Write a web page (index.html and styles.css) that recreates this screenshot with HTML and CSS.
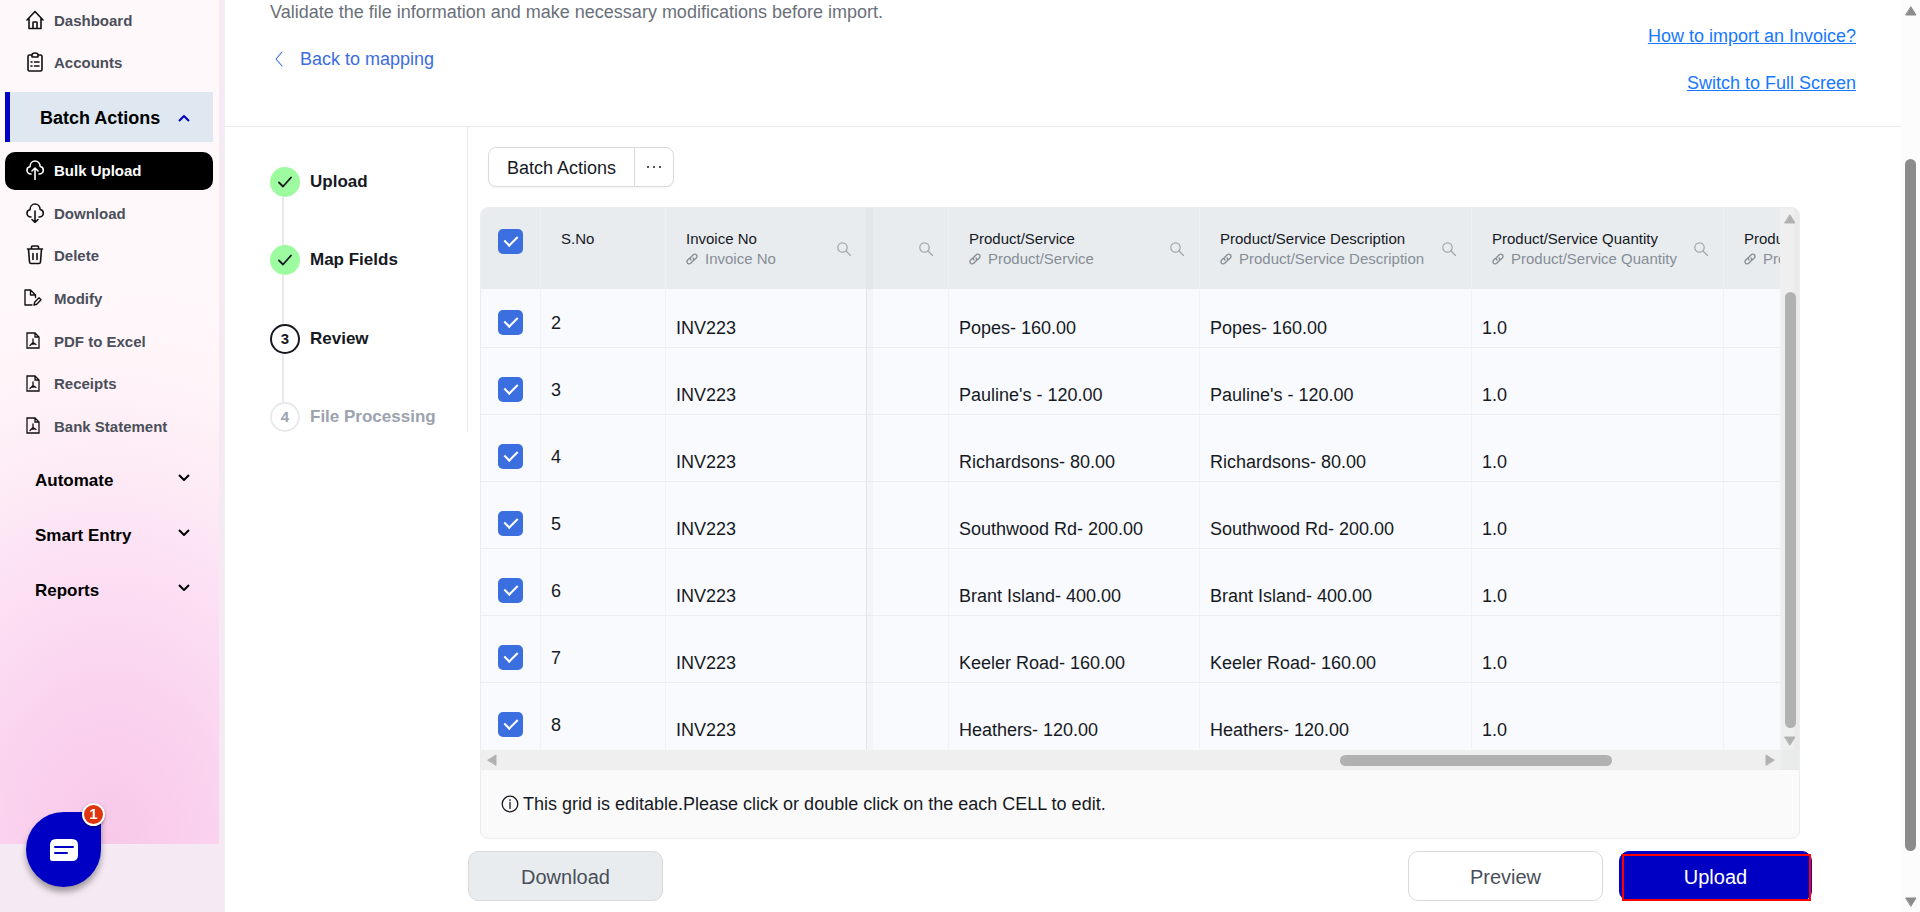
FILE: index.html
```html
<!DOCTYPE html>
<html lang="en">
<head>
<meta charset="utf-8">
<meta name="viewport" content="width=device-width, initial-scale=1">
<title>Bulk Upload - Review</title>
<link rel="stylesheet" href="styles.css">
</head>
<body>
<svg class="sprite" aria-hidden="true">
  <symbol id="i-home" viewBox="0 0 18 20"><path d="M1 10 9 1.500 17 10M3 8.500V18.500H15V8.500M7 18.500V12.500Q7 12 7.500 12H10.500Q11 12 11 12.500V18.500"/></symbol>
  <symbol id="i-clip" viewBox="0 0 18 20"><path d="M6 3H3.500Q2 3 2 4.500V17.500Q2 19 3.500 19H14.500Q16 19 16 17.500V4.500Q16 3 14.500 3H12M6 5V3Q6 1 9 1Q12 1 12 3V5ZM5 10H6M8.500 10H13M5 14H6M8.500 14H13"/></symbol>
  <symbol id="i-cloud-up" viewBox="0 0 18 20"><path d="M5 14C2.500 14 1 12.300 1 10.200C1 8.300 2.300 7 4 6.800C4 3.500 6.200 1 9 1C11.800 1 14 3.500 14.200 6.500C16 6.800 17.300 8.300 17.300 10.200C17.300 12.300 15.500 14 13 14M9 19.500V8M6 11 9 8 12 11"/></symbol>
  <symbol id="i-cloud-down" viewBox="0 0 18 20"><path d="M5 14C2.500 14 1 12.300 1 10.200C1 8.300 2.300 7 4 6.800C4 3.500 6.200 1 9 1C11.800 1 14 3.500 14.200 6.500C16 6.800 17.300 8.300 17.300 10.200C17.300 12.300 15.500 14 13 14M9 8V19.300M6 16.500 9 19.300 12 16.500"/></symbol>
  <symbol id="i-trash" viewBox="0 0 18 20"><path d="M1.500 4H16.500M5.500 4V2Q5.500 1 6.500 1H11.500Q12.500 1 12.500 2V4M2.500 4 3.500 17Q3.700 18.500 5 18.500H13Q14.300 18.500 14.500 17L15.500 4M7 8.500V14.500M11 8.500V14.500"/></symbol>
  <symbol id="i-modify" viewBox="0 0 18 17"><path d="M8 16H1V1H6.500L11.500 6V8.500M6.500 1V6H11.500M10 16 10.600 13.300 15 8.800 17 10.700 12.700 15.300Z"/></symbol>
  <symbol id="i-pdf" viewBox="0 0 14 17"><path d="M1 1H9L13 5V16H1ZM9 1V5H13M7 7V10.500L4 13.500M7 10.500 10 12.500M6 12H8"/></symbol>
  <symbol id="i-up" viewBox="0 0 12 8"><path d="M1 7 6 2 11 7"/></symbol>
  <symbol id="i-down" viewBox="0 0 12 8"><path d="M1 1 6 6 11 1"/></symbol>
  <symbol id="i-back" viewBox="0 0 8 16"><path d="M7 1 1 8 7 15"/></symbol>
  <symbol id="i-tick" viewBox="0 0 14 12"><path d="M1 6.500 5 10.500 13 1.500"/></symbol>
  <symbol id="i-search" viewBox="0 0 14 14"><circle cx="5.500" cy="5.500" r="4.700"/><path d="M9 9 13.500 13.500"/></symbol>
  <symbol id="i-link" viewBox="0 0 12 12"><path d="M5 7C4 6 4 5 5 4L7 2C8 1 9.500 1 10.400 1.800C11.200 2.700 11.200 4 10.300 5L8.500 6.800M7 5C8 6 8 7 7 8L5 10C4 11 2.500 11 1.600 10.200C.8 9.300.8 8 1.700 7L3.500 5.200"/></symbol>
  <symbol id="i-info" viewBox="0 0 18 18"><circle cx="9" cy="9" r="7.800"/><path d="M9 7.500V13.500M9 4.700V5.500"/></symbol>
</svg>

<div class="page">
  <aside class="sidebar">
    <nav class="nav">
      <ul class="nav-top">
        <li><a class="item" href="#"><svg class="icon"><use href="#i-home"/></svg>Dashboard</a></li>
        <li><a class="item" href="#"><svg class="icon"><use href="#i-clip"/></svg>Accounts</a></li>
      </ul>
      <button class="group-open" type="button">Batch Actions<svg class="chev"><use href="#i-up"/></svg></button>
      <ul class="nav-list">
        <li><a class="item current" href="#"><svg class="icon"><use href="#i-cloud-up"/></svg>Bulk Upload</a></li>
        <li><a class="item" href="#"><svg class="icon"><use href="#i-cloud-down"/></svg>Download</a></li>
        <li><a class="item" href="#"><svg class="icon"><use href="#i-trash"/></svg>Delete</a></li>
        <li><a class="item" href="#"><svg class="icon file"><use href="#i-modify"/></svg>Modify</a></li>
        <li><a class="item" href="#"><svg class="icon pdf"><use href="#i-pdf"/></svg>PDF to Excel</a></li>
        <li><a class="item" href="#"><svg class="icon pdf"><use href="#i-pdf"/></svg>Receipts</a></li>
        <li><a class="item" href="#"><svg class="icon pdf"><use href="#i-pdf"/></svg>Bank Statement</a></li>
      </ul>
      <button class="group" type="button">Automate<svg class="chev"><use href="#i-down"/></svg></button>
      <button class="group" type="button">Smart Entry<svg class="chev"><use href="#i-down"/></svg></button>
      <button class="group" type="button">Reports<svg class="chev"><use href="#i-down"/></svg></button>
    </nav>
    <button class="chat" type="button" aria-label="Open chat">
      <svg class="chat-icon" viewBox="0 0 28 22"><path fill="#fff" d="M6 0H22Q28 0 28 6V16Q28 22 22 22H2Q0 22 0 20V6Q0 0 6 0Z"/><path stroke="#0000c4" stroke-width="2" d="M5 8H23M5 14H17"/></svg>
      <span class="badge">1</span>
    </button>
  </aside>

  <main class="main">
    <header class="head">
      <div class="head-left">
        <p class="intro">Validate the file information and make necessary modifications before import.</p>
        <a class="back" href="#"><svg class="back-icon"><use href="#i-back"/></svg>Back to mapping</a>
      </div>
      <div class="head-links">
        <a href="#">How to import an Invoice?</a>
        <a href="#">Switch to Full Screen</a>
      </div>
    </header>

    <div class="body">
      <ol class="steps">
        <li class="step done"><span class="dot"><svg><use href="#i-tick"/></svg></span>Upload</li>
        <li class="step done"><span class="dot"><svg><use href="#i-tick"/></svg></span>Map Fields</li>
        <li class="step active"><span class="dot">3</span>Review</li>
        <li class="step todo"><span class="dot">4</span>File Processing</li>
      </ol>

      <section class="work">
        <div class="split">
          <button class="split-main" type="button">Batch Actions</button>
          <button class="split-more" type="button" aria-label="More actions"><svg viewBox="0 0 14 4"><circle cx="1" cy="2" r="1"/><circle cx="7" cy="2" r="1"/><circle cx="13" cy="2" r="1"/></svg></button>
        </div>

        <div class="card">
          <div class="grid-wrap">
            <div class="grid-view">
              <table class="grid">
                <colgroup><col class="c-check"><col class="c-no"><col class="c-inv"><col class="c-gap"><col class="c-prod"><col class="c-desc"><col class="c-qty"><col></colgroup>
                <thead>
                  <tr>
                    <th class="check"><input type="checkbox" checked aria-label="Select all rows"></th>
                    <th>S.No</th>
                    <th class="pinned"><div class="th"><div>Invoice No<span class="map"><svg><use href="#i-link"/></svg>Invoice No</span></div><svg class="search"><use href="#i-search"/></svg></div></th>
                    <th><div class="th end"><svg class="search"><use href="#i-search"/></svg></div></th>
                    <th><div class="th"><div>Product/Service<span class="map"><svg><use href="#i-link"/></svg>Product/Service</span></div><svg class="search"><use href="#i-search"/></svg></div></th>
                    <th><div class="th"><div>Product/Service Description<span class="map"><svg><use href="#i-link"/></svg>Product/Service Description</span></div><svg class="search"><use href="#i-search"/></svg></div></th>
                    <th><div class="th"><div>Product/Service Quantity<span class="map"><svg><use href="#i-link"/></svg>Product/Service Quantity</span></div><svg class="search"><use href="#i-search"/></svg></div></th>
                    <th class="last"><div class="th"><div>Product/Service Rate<span class="map"><svg><use href="#i-link"/></svg>Product/Service Rate</span></div></div></th>
                  </tr>
                </thead>
                <tbody>
                  <tr><td class="check"><input type="checkbox" checked aria-label="Select row 2"></td><td class="no">2</td><td class="pinned">INV223</td><td></td><td>Popes- 160.00</td><td>Popes- 160.00</td><td>1.0</td><td></td></tr>
                  <tr><td class="check"><input type="checkbox" checked aria-label="Select row 3"></td><td class="no">3</td><td class="pinned">INV223</td><td></td><td>Pauline's - 120.00</td><td>Pauline's - 120.00</td><td>1.0</td><td></td></tr>
                  <tr><td class="check"><input type="checkbox" checked aria-label="Select row 4"></td><td class="no">4</td><td class="pinned">INV223</td><td></td><td>Richardsons- 80.00</td><td>Richardsons- 80.00</td><td>1.0</td><td></td></tr>
                  <tr><td class="check"><input type="checkbox" checked aria-label="Select row 5"></td><td class="no">5</td><td class="pinned">INV223</td><td></td><td>Southwood Rd- 200.00</td><td>Southwood Rd- 200.00</td><td>1.0</td><td></td></tr>
                  <tr><td class="check"><input type="checkbox" checked aria-label="Select row 6"></td><td class="no">6</td><td class="pinned">INV223</td><td></td><td>Brant Island- 400.00</td><td>Brant Island- 400.00</td><td>1.0</td><td></td></tr>
                  <tr><td class="check"><input type="checkbox" checked aria-label="Select row 7"></td><td class="no">7</td><td class="pinned">INV223</td><td></td><td>Keeler Road- 160.00</td><td>Keeler Road- 160.00</td><td>1.0</td><td></td></tr>
                  <tr><td class="check"><input type="checkbox" checked aria-label="Select row 8"></td><td class="no">8</td><td class="pinned">INV223</td><td></td><td>Heathers- 120.00</td><td>Heathers- 120.00</td><td>1.0</td><td></td></tr>
                </tbody>
              </table>
            </div>
            <div class="vbar"><svg viewBox="0 0 12 10"><path d="M6 1 11 9H1Z"/></svg><span class="vthumb"></span><svg viewBox="0 0 12 10"><path d="M6 9 11 1H1Z"/></svg></div>
            <div class="hbar"><svg viewBox="0 0 10 12"><path d="M1 6 9 1V11Z"/></svg><span class="htrack"><span class="hthumb"></span></span><svg viewBox="0 0 10 12"><path d="M9 6 1 1V11Z"/></svg></div>
            <div class="corner"></div>
          </div>
          <p class="note"><svg><use href="#i-info"/></svg>This grid is editable.Please click or double click on the each CELL to edit.</p>
        </div>

        <div class="actions">
          <button class="btn soft" type="button">Download</button>
          <button class="btn plain" type="button">Preview</button>
          <button class="btn primary" type="button">Upload</button>
        </div>
      </section>
    </div>
  </main>

  <div class="pagebar"><svg viewBox="0 0 12 10"><path d="M6 1 11 9H1Z"/></svg><span class="pagethumb"></span><svg viewBox="0 0 12 10"><path d="M6 9 11 1H1Z"/></svg></div>
</div>
</body>
</html>
```

FILE: styles.css
```css
* { box-sizing: border-box; }

body {
  margin: 0;
  font: 18px/24px "Liberation Sans", Arial, sans-serif;
  color: #16191f;
  background: #fff;
}

ul, ol, p { margin: 0; padding: 0; list-style: none; }
button { font: inherit; color: inherit; cursor: pointer; }
svg { flex: none; fill: none; stroke: currentColor; stroke-linecap: round; stroke-linejoin: round; }
.sprite { position: absolute; width: 0; height: 0; }

.page {
  display: grid;
  grid-template-columns: 225px minmax(0, 1fr) 19px;
  min-height: 100vh;
}

/* Sidebar */
.sidebar {
  background: #f5e9f3;
  padding-right: 6px;
}
.nav {
  height: 844px;
  padding: 2px 6px 0 5px;
  background: radial-gradient(ellipse 420px 560px at 50% 100%, #f8c8e9 0%, #fad2ee 25%, #fce0f4 50%, #fdeaf5 66%, #fff5f9 86%, #fff8fb 100%);
}
.nav-top { display: grid; gap: 4px; padding-bottom: 10px; }
.nav-list {
  display: flex;
  flex-direction: column;
  justify-content: space-between;
  height: 294px;
  margin: 10px 0 6px;
}
.item {
  display: flex;
  align-items: center;
  gap: 10px;
  height: 38px;
  padding-left: 21px;
  border-radius: 10px;
  font-size: 15px;
  font-weight: 700;
  color: #4a4f5a;
  text-decoration: none;
}
.icon { width: 18px; height: 20px; margin-bottom: 2px; color: #111; stroke-width: 1.6; }
.icon.file { height: 17px; margin: 0 2px 2px -2px; stroke-width: 1.4; }
.icon.pdf { width: 14px; height: 17px; margin: 0 4px 2px 0; stroke-width: 1.3; stroke-linejoin: miter; }
.item.current { background: #000; color: #fff; }
.item.current .icon { color: #fff; }
.group-open, .group {
  display: flex;
  align-items: center;
  justify-content: space-between;
  width: 100%;
  height: 55px;
  padding: 2px 23px 0 30px;
  border: 0;
  background: none;
  font-size: 17px;
  font-weight: 700;
  color: #000;
}
.group-open {
  height: 50px;
  border-left: 5px solid #0000c4;
  background: #dfe8f1;
  font-size: 18px;
}
.chev { width: 12px; height: 8px; stroke-width: 2; stroke-linecap: butt; }
.group .chev { margin-bottom: 6px; }
.group-open .chev { color: #0000c4; }

.chat {
  position: fixed;
  left: 26px;
  bottom: 25px;
  display: grid;
  place-items: center;
  width: 75px;
  height: 75px;
  padding: 0;
  border: 0;
  border-radius: 50% 0 50% 50%;
  background: #0000c4;
  box-shadow: 0 5px 6px rgba(0, 0, 0, .35);
}
.chat-icon { width: 28px; height: 22px; stroke: none; }
.badge {
  position: absolute;
  top: -9px;
  right: -4px;
  width: 23px;
  height: 23px;
  border: 2px solid #fff;
  border-radius: 50%;
  background: #e0340c;
  color: #fff;
  font-size: 15px;
  font-weight: 700;
  line-height: 17px;
  box-shadow: 0 1px 3px rgba(0, 0, 0, .4);
}

/* Header */
.head {
  display: flex;
  justify-content: space-between;
  height: 127px;
  padding: 0 45px;
  border-bottom: 1px solid #e9eaec;
}
.intro { color: #6a7079; }
.back {
  display: inline-flex;
  align-items: center;
  gap: 17px;
  margin-top: 23px;
  padding-left: 5px;
  color: #3b6de0;
  text-decoration: none;
}
.back-icon { width: 8px; height: 16px; stroke-width: 1.1; }
.head-links {
  display: flex;
  flex-direction: column;
  align-items: flex-end;
  gap: 23px;
  padding-top: 24px;
}
.head-links a { color: #1677ff; }

/* Steps */
.body { display: grid; grid-template-columns: 243px minmax(0, 1fr); align-items: start; }
.steps {
  display: flex;
  flex-direction: column;
  justify-content: space-between;
  height: 305px;
  padding: 40px 0 0 45px;
  border-right: 1px solid #e9eaec;
}
.step {
  position: relative;
  display: flex;
  align-items: center;
  gap: 10px;
  height: 30px;
  font-size: 17px;
  font-weight: 700;
}
.step:not(:last-child)::before {
  content: "";
  position: absolute;
  top: 30px;
  left: 12px;
  width: 2px;
  height: 49px;
  background: #e9eaee;
}
.dot {
  display: grid;
  place-items: center;
  width: 30px;
  height: 30px;
  border: 2px solid #16191f;
  border-radius: 50%;
  font-size: 15px;
}
.dot svg { width: 14px; height: 12px; stroke-width: 1.8; }
.done .dot { border-color: #9dfc9f; background: #9dfc9f; }
.todo { color: #9ca3af; }
.todo .dot { border-color: #e9eaee; }

/* Toolbar */
.work { padding-right: 89px; }
.split { display: flex; padding: 20px 0 20px 20px; }
.split button {
  height: 40px;
  border: 1px solid #d9dadd;
  background: #fff;
  box-shadow: 0 2px 2px rgba(0, 0, 0, .03);
}
.split .split-main { width: 147px; padding: 2px 0 0; border-radius: 8px 0 0 8px; }
.split .split-more { width: 40px; margin-left: -1px; padding: 0; border-radius: 0 8px 8px 0; }
.split-more svg { display: block; width: 14px; height: 4px; margin: 0 auto; fill: #16191f; stroke: none; }

/* Editable grid */
.card {
  margin: 0 12px;
  border: 1px solid #ededef;
  border-radius: 8px;
  background: #fafafa;
  overflow: hidden;
}
.grid-wrap { display: grid; grid-template-columns: minmax(0, 1fr) 18px; }
.grid-view { overflow: hidden; }
.grid { width: 100%; table-layout: fixed; border-collapse: separate; border-spacing: 0; }
.c-check { width: 60px; }
.c-no { width: 125px; }
.c-inv { width: 201px; }
.c-gap { width: 82px; }
.c-prod { width: 251px; }
.c-desc { width: 272px; }
.c-qty { width: 252px; }
.grid th, .grid td {
  border-right: 1px solid #f1f2f4;
  white-space: nowrap;
  overflow: hidden;
  text-align: left;
}
.grid th {
  height: 81px;
  padding: 21px 15px 0 20px;
  border-right-color: #eef0f2;
  background: #e8ecef;
  font-size: 15px;
  line-height: 20px;
  font-weight: 400;
  vertical-align: top;
}
.grid td {
  height: 67px;
  padding: 0 10px 7px;
  border-bottom: 1px solid #eceef0;
  background: #f9fafd;
  vertical-align: bottom;
}
.grid tbody tr:first-child td { height: 59px; }
.grid tr:last-child td { border-bottom-color: #f9fafd; }
.grid td.no { padding-bottom: 12px; }
.grid td.check { padding: 0 0 12px 17px; line-height: 0; }
.grid th.check { padding: 21px 0 0 17px; line-height: 0; }
.grid .pinned { position: relative; overflow: visible; border-right-color: #e2e4e6; }
.pinned::after {
  content: "";
  position: absolute;
  top: 0;
  right: -7px;
  bottom: -1px;
  width: 6px;
  background: rgba(0, 0, 0, .02);
}
.check input {
  appearance: none;
  display: inline-grid;
  place-items: center;
  width: 25px;
  height: 25px;
  margin: 0;
  border-radius: 5px;
  background: #3b6fe0;
}
.check input::after {
  content: "";
  width: 6px;
  height: 11px;
  margin: 0 0 4px 1px;
  border: solid #fff;
  border-width: 0 2px 2px 0;
  transform: rotate(45deg);
}
.th { display: flex; align-items: center; justify-content: space-between; }
.th.end { justify-content: flex-end; height: 40px; }
.map { display: flex; align-items: center; gap: 7px; color: #868e96; }
.map svg { width: 12px; height: 12px; stroke-width: 1.3; }
.search { width: 14px; height: 14px; color: #a2a6aa; stroke-width: 1.2; }

/* Scroll tracks */
.vbar, .hbar { display: flex; align-items: center; background: #efefef; }
.vbar { flex-direction: column; gap: 4px; padding: 6px 0 4px; box-shadow: inset -5px 0 #eaeaea; }
.vbar svg, .hbar svg { width: 12px; height: 10px; fill: #b1b1b1; stroke: #b1b1b1; }
.vthumb { flex: 1; width: 11px; margin: 64px 0 4px; border-radius: 6px; background: #b1b1b1; }
.hbar { height: 20px; padding: 0 6px; }
.hbar svg { width: 10px; height: 12px; }
.htrack { flex: 1; }
.hthumb { display: block; width: 272px; height: 11px; margin-left: 66.5%; border-radius: 6px; background: #b1b1b1; }
.corner { background: #eaebeb; }
.note { display: flex; align-items: center; gap: 4px; height: 68px; padding-left: 20px; }
.note svg { width: 18px; height: 18px; stroke-width: 1.3; }

/* Footer buttons */
.actions { display: flex; gap: 16px; padding: 12px 0 10px; }
.btn {
  width: 195px;
  height: 50px;
  padding: 2px 0 0;
  border: 1px solid #d9dadd;
  border-radius: 10px;
  background: #fff;
  font-size: 20px;
  color: #4a4f5a;
}
.btn.soft { margin-right: auto; background: #e8ecef; }
.btn.primary {
  position: relative;
  width: 193px;
  border-color: #0000c4;
  background: #0000c4;
  color: #fff;
}
.btn.primary::after {
  content: "";
  position: absolute;
  inset: 2px 0 -1px 2px;
  border: 2px solid #f00;
}

/* Page scroll track */
.pagebar {
  display: flex;
  flex-direction: column;
  align-items: center;
  padding: 6px 0 5px;
  background: #fcfcfc;
}
.pagebar svg { width: 12px; height: 10px; fill: #8b8b8b; stroke: #8b8b8b; }
.pagethumb { flex: 1; width: 11px; margin: 143px 0 46px; border-radius: 6px; background: #8b8b8b; }
```
